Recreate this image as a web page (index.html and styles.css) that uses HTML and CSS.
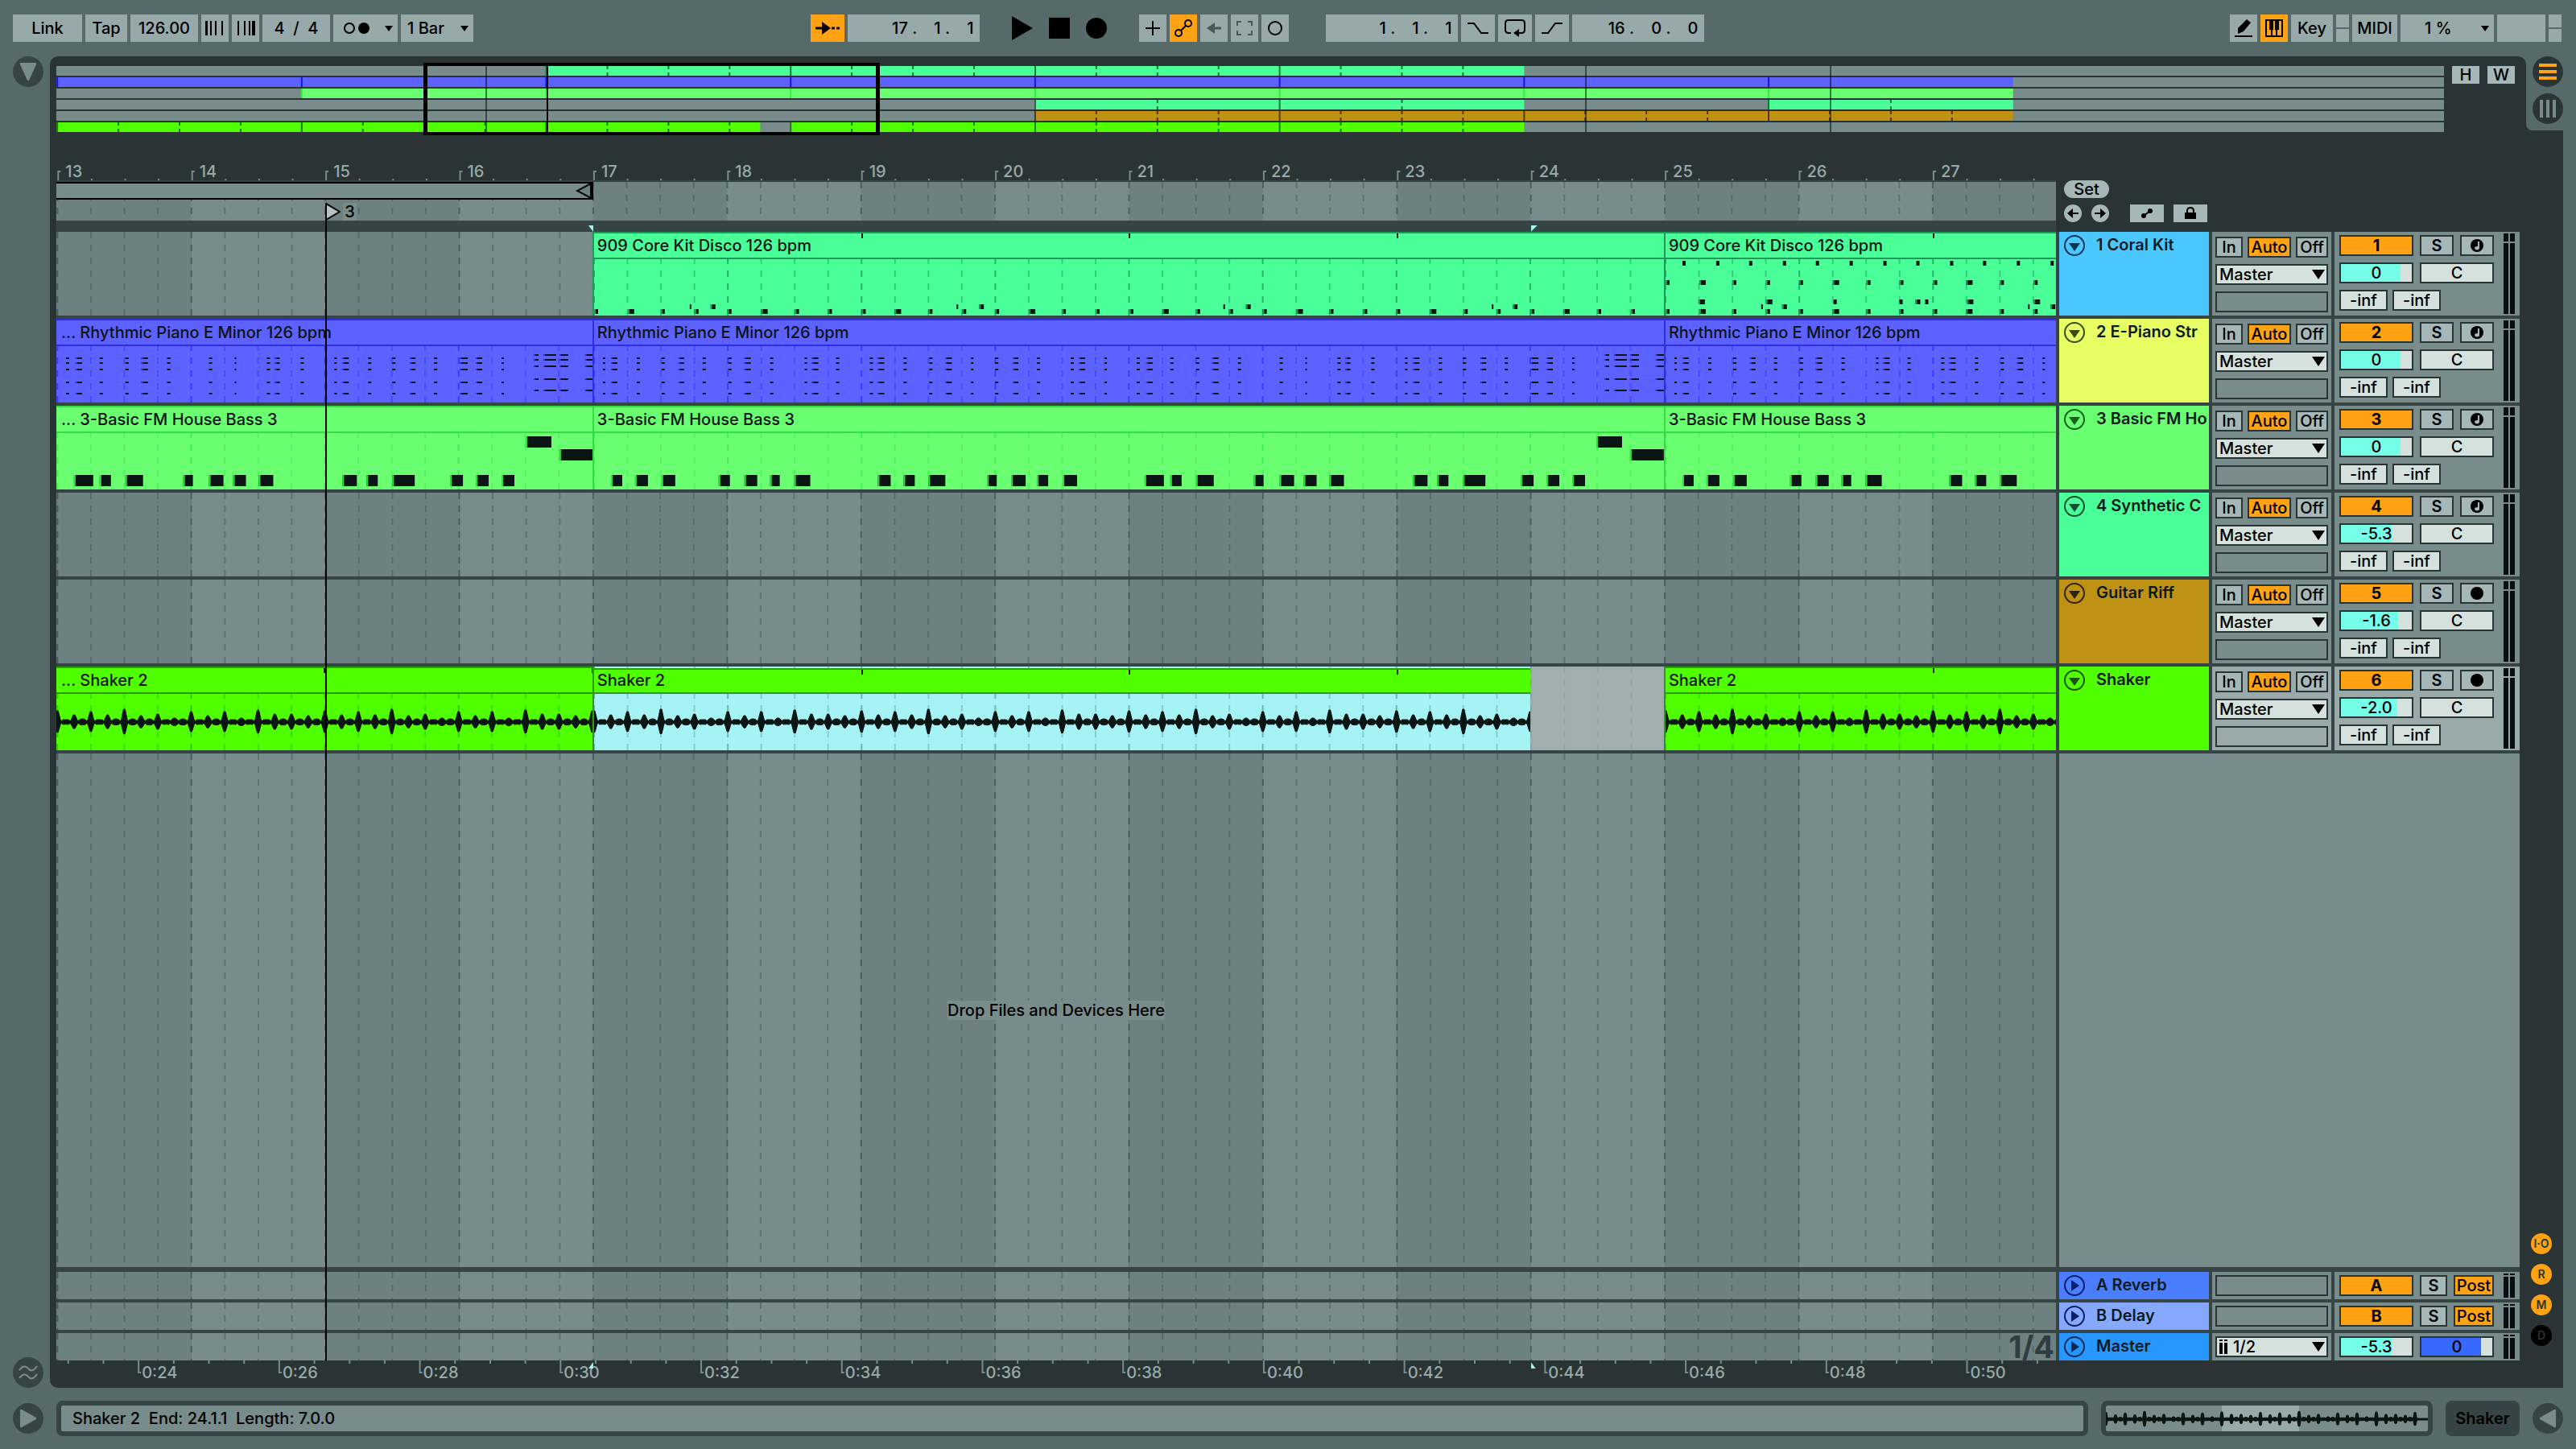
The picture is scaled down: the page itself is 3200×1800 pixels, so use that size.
FILE: index.html
```html
<!DOCTYPE html>
<html lang="en">
<head>
<meta charset="UTF-8">
<title>Arrangement</title>
<link rel="stylesheet" href="styles.css">
</head>
<body>

<header class="toolbar">
  <div class="group">
    <button class="btn w86">Link</button>
    <button class="btn w52">Tap</button>
    <input class="btn w84" value="126.00" aria-label="Tempo">
    <button class="btn w34" aria-label="Nudge down"><svg width="24" height="18"><path d="M2 0v18M7 0v18M13 0v18M21 0v18" stroke="#000" stroke-width="2"/><path d="M1 0v18" stroke="#000" stroke-width="3"/></svg></button>
    <button class="btn w34" aria-label="Nudge up"><svg width="24" height="18"><path d="M3 0v18M11 0v18M17 0v18" stroke="#000" stroke-width="2"/><path d="M22 0v18" stroke="#000" stroke-width="4"/></svg></button>
    <input class="btn w84 sig" value="4  /  4" aria-label="Time signature">
    <button class="btn w80 metro" aria-label="Metronome"><svg width="34" height="18"><circle cx="8" cy="9" r="6" fill="none" stroke="#000" stroke-width="2"/><circle cx="26" cy="9" r="7"/></svg><svg width="10" height="7"><path d="M0 0h10L5 7z"/></svg></button>
    <span class="pick w90"><select aria-label="Quantization"><option>1 Bar</option></select><svg width="10" height="7"><path d="M0 0h10L5 7z"/></svg></span>
  </div>
  <div class="space-left"></div>
  <div class="group">
    <button class="btn w42 on" aria-label="Follow"><svg width="30" height="18"><path d="M0 9h10M20 9h4M26 9h4" stroke="#000" stroke-width="3"/><path d="M8 1l11 8-11 8z"/></svg></button>
    <input class="btn position" value="17 .    1 .    1" aria-label="Arrangement position">
  </div>
  <div class="group transport">
    <button class="bare" aria-label="Play"><svg width="26" height="30"><path d="M0 0l26 15L0 30z"/></svg></button>
    <button class="bare" aria-label="Stop"><svg width="26" height="26"><path d="M0 0h26v26H0z"/></svg></button>
    <button class="bare" aria-label="Record"><svg width="26" height="26"><circle cx="13" cy="13" r="13"/></svg></button>
  </div>
  <div class="group">
    <button class="btn w34" aria-label="Overdub"><svg width="18" height="18"><path d="M9 0v18M0 9h18" stroke="#000" stroke-width="2"/></svg></button>
    <button class="btn w34 on" aria-label="Automation arm"><svg width="24" height="24" fill="none" stroke="#000" stroke-width="2"><circle cx="6" cy="18" r="4"/><circle cx="18" cy="6" r="4"/><path d="M9 15l6-6"/></svg></button>
    <button class="btn w34" aria-label="Re-enable automation"><svg width="18" height="16"><path d="M9 8h9" stroke="#44595a" stroke-width="3"/><path d="M0 8l10-7v14z" fill="#44595a"/></svg></button>
    <button class="btn w34" aria-label="Capture"><svg width="20" height="18" fill="none" stroke="#44595a" stroke-width="2"><path d="M1 6V1h5M14 1h5v5M19 12v5h-5M6 17H1v-5"/></svg></button>
    <button class="btn w34" aria-label="Session record"><svg width="20" height="20"><circle cx="10" cy="10" r="8" fill="none" stroke="#000" stroke-width="2"/></svg></button>
  </div>
  <div class="group loop-group">
    <input class="btn position" value="1 .    1 .    1" aria-label="Loop start">
    <button class="btn w42" aria-label="Punch in"><svg width="26" height="14"><path d="M0 1h8l9 12h9" fill="none" stroke="#000" stroke-width="2"/></svg></button>
    <button class="btn w42" aria-label="Loop"><svg width="26" height="24"><path d="M8 18H5q-4 0-4-4V6q0-4 4-4h16q4 0 4 4v8q0 4-4 4h-4" fill="none" stroke="#000" stroke-width="2"/><path d="M11 18l7-5v10z"/></svg></button>
    <button class="btn w42" aria-label="Punch out"><svg width="26" height="14"><path d="M0 13h8l9-12h9" fill="none" stroke="#000" stroke-width="2"/></svg></button>
    <input class="btn position" value="16 .    0 .    0" aria-label="Loop length">
  </div>
  <div class="space-right"></div>
  <div class="group">
    <button class="btn w34" aria-label="Draw mode"><svg width="22" height="24"><path d="M4 12L15 1l5 4-9 11-7 3z"/><path d="M0 22h22" stroke="#000" stroke-width="2"/></svg></button>
    <button class="btn w34 on" aria-label="Computer keyboard"><svg width="22" height="22"><path d="M1 1h20v20H1zM8 12v9M14 12v9" fill="none" stroke="#000" stroke-width="2"/><path d="M5 1h5v12H5zM12 1h5v12h-5z"/></svg></button>
    <button class="btn w52">Key</button>
    <span class="leds"><i></i><i></i></span>
    <button class="btn w56">MIDI</button>
    <span class="pick cpu"><select aria-label="CPU load"><option>1 %</option></select><svg width="10" height="7"><path d="M0 0h10L5 7z"/></svg></span>
    <span class="btn w60"></span>
    <span class="leds"><i></i><i></i></span>
  </div>
</header>

<main class="workspace">
  <aside class="gutter">
    <button class="round" aria-label="Show browser"><svg width="22" height="24"><path d="M2 1h18q2 0 1 2l-9 20h-2L1 3q-1-2 1-2z" fill="#788d8b"/></svg></button>
    <button class="round" aria-label="Groove pool"><svg width="24" height="20" fill="none" stroke="#788d8b" stroke-width="2"><path d="M1 7q6-8 11-2t11-3M1 17q6-8 11-2t11-3"/></svg></button>
  </aside>

  <section class="panel">
    <div class="overview-row">
      <div class="overview" id="overview"></div>
      <button class="small w34">H</button>
      <button class="small w34">W</button>
    </div>

    <div class="ruler-row">
      <div class="ruler">
        <div class="bars" id="bars"></div>
        <div class="scrub" id="scrub"></div>
        <div class="divider" id="divider"></div>
      </div>
      <div class="ruler-tools">
        <button class="set">Set</button>
        <div class="tool-line">
          <button class="dot" aria-label="Previous locator"><svg width="14" height="12"><path d="M5 6h9" stroke="#000" stroke-width="2"/><path d="M0 6l7-6v12z"/></svg></button>
          <button class="dot" aria-label="Next locator"><svg width="14" height="12"><path d="M0 6h9" stroke="#000" stroke-width="2"/><path d="M14 6L7 0v12z"/></svg></button>
          <button class="small w42 first" aria-label="Automation mode"><svg width="16" height="14"><path d="M4 10l8-6" stroke="#000" stroke-width="2"/><circle cx="4" cy="10" r="3"/><circle cx="12" cy="4" r="3"/></svg></button>
          <button class="small w42" aria-label="Lock envelopes"><svg width="16" height="16"><path d="M1 7h14v8H1z"/><path d="M4 8V5q0-4 4-4t4 4v3" fill="none" stroke="#000" stroke-width="2"/></svg></button>
        </div>
      </div>
    </div>

    <div class="arranger">
      <div id="tracks"></div>
      <div class="row drop-row">
        <div class="lane" id="dropLane"><span class="drop-text">Drop Files and Devices Here</span></div>
        <div class="drop-side"></div>
      </div>
      <div class="returns" id="returns"></div>
      <div class="playhead-area"><div class="playhead" id="playhead"></div></div>
    </div>
    <div class="time-ruler" id="timeRuler"></div>
  </section>

  <aside class="gutter right">
    <div class="views">
      <button class="round dark" aria-label="Arrangement view"><svg width="22" height="20"><path d="M0 2h22M0 10h22M0 18h22" stroke="#ffa315" stroke-width="4"/></svg></button>
      <button class="round dark" aria-label="Session view"><svg width="20" height="22"><path d="M2 0v22M10 0v22M18 0v22" stroke="#788d8b" stroke-width="4"/></svg></button>
    </div>
    <div class="sections">
      <button class="chip">I·O</button>
      <button class="chip">R</button>
      <button class="chip">M</button>
      <button class="chip off">D</button>
    </div>
  </aside>
</main>

<footer class="status">
  <button class="round" aria-label="Show info"><svg width="22" height="24"><path d="M1 2v20q0 2 2 1l18-10v-2L3 1Q1 0 1 2z" fill="#788d8b"/></svg></button>
  <div class="info">Shaker 2&nbsp; End: 24.1.1&nbsp; Length: 7.0.0</div>
  <div class="mini" id="mini"></div>
  <button class="device">Shaker</button>
  <button class="round" aria-label="Show detail"><svg width="22" height="24"><path d="M21 2v20q0 2-2 1L1 13v-2L19 1q2-1 2 1z" fill="#788d8b"/></svg></button>
</footer>

<script src="script.js"></script>
</body>
</html>
```
FILE: styles.css
```css
* {
  box-sizing: border-box;
}
body {
  margin: 0;
  height: 100vh;
  display: flex;
  flex-direction: column;
  background: #566a6a;
  color: #000;
  font-family: Inter, "Liberation Sans", sans-serif;
  font-size: 20px;
  font-weight: 500;
  line-height: 24px;
  overflow: hidden;
}
button, input, select {
  font: inherit;
  color: inherit;
  border: 0;
  border-radius: 0;
  padding: 0;
  margin: 0;
  appearance: none;
  background: none;
}
svg {
  display: block;
}

/* toolbar */
.toolbar {
  display: flex;
  align-items: center;
  padding: 18px 18px 18px 16px;
}
.group {
  display: flex;
  gap: 4px;
}
.space-left {
  flex: 9;
}
.space-right {
  flex: 14;
}
.btn, .pick {
  height: 34px;
  background: #97aaa9;
  display: flex;
  align-items: center;
  justify-content: center;
  text-align: center;
}
.w34 { width: 34px; }
.w42 { width: 42px; }
.w52 { width: 52px; }
.w56 { width: 56px; }
.w60 { width: 60px; }
.w80 { width: 80px; }
.w84 { width: 84px; }
.w86 { width: 86px; }
.w90 { width: 90px; }
.on {
  background: #ffa315;
}
.sig, .position {
  white-space: pre;
}
.position {
  width: 164px;
  text-align: right;
  padding-right: 8px;
}
.metro {
  justify-content: space-between;
  padding: 0 6px 0 12px;
}
.transport {
  margin: 0 40px;
  gap: 20px;
  align-items: center;
}
.loop-group {
  margin-left: 46px;
}
.pick {
  position: relative;
}
.pick select {
  width: 100%;
  height: 100%;
  padding-left: 8px;
}
.pick svg {
  position: absolute;
  right: 6px;
  pointer-events: none;
}
.cpu {
  width: 116px;
}
.cpu select {
  padding-left: 30px;
}
.leds {
  width: 16px;
  display: flex;
  flex-direction: column;
  gap: 2px;
}
.leds i {
  flex: 1;
  background: #97aaa9;
}

/* workspace */
.workspace {
  flex: 1;
  min-height: 0;
  display: flex;
}
.gutter {
  width: 62px;
  padding-left: 16px;
  display: flex;
  flex-direction: column;
  justify-content: space-between;
}
.round {
  width: 38px;
  height: 38px;
  flex: none;
  border-radius: 50%;
  background: #364445;
  display: flex;
  align-items: center;
  justify-content: center;
}
.round.dark {
  background: #2a3435;
}
.gutter.right {
  width: 62px;
  padding: 0 16px 0 0;
  background: linear-gradient(#2a3435, #2a3435) left / 46px 100% no-repeat;
}
.views {
  width: 62px;
  height: 92px;
  padding-left: 8px;
  background: #566a6a;
  border-bottom-left-radius: 8px;
  display: flex;
  flex-direction: column;
  gap: 8px;
}
.sections {
  display: flex;
  flex-direction: column;
  gap: 12px;
  padding: 0 0 52px 6px;
}
.chip {
  width: 26px;
  height: 26px;
  border-radius: 50%;
  background: #ffa315;
  color: #2a3435;
  font-size: 14px;
  font-weight: 600;
  line-height: 26px;
}
.chip.off {
  background: #000;
}
.panel {
  flex: 1;
  min-width: 0;
  display: flex;
  flex-direction: column;
  background: #2a3435;
  border-radius: 10px 10px 0 10px;
  padding: 12px 8px 0 8px;
}
.small {
  height: 22px;
  background: #a5b7b6;
  display: flex;
  align-items: center;
  justify-content: center;
}
.overview-row {
  display: flex;
  gap: 10px;
  height: 142px;
  padding-right: 6px;
}
.overview {
  position: relative;
  flex: 1;
  height: 82px;
  display: flex;
  flex-direction: column;
  gap: 2px;
}
.overview .strip {
  height: 12px;
  background: #788d8b;
}
.strip svg, .lane > svg, .clip > svg, .scrub > svg, .mini svg {
  width: 100%;
  height: 100%;
}
.overview .cursor {
  position: absolute;
  top: 0;
  bottom: 0;
  width: 2px;
  background: rgba(0, 0, 0, 0.5);
}
.overview .cursor.insert {
  background: #000;
}
.overview .viewport {
  position: absolute;
  top: -4px;
  bottom: -4px;
  border: 4px solid #000;
  border-width: 4px 5px;
}

/* ruler */
.ruler-row {
  display: flex;
  height: 64px;
}
.ruler {
  flex: 1;
  position: relative;
  margin-top: -18px;
  display: flex;
  flex-direction: column;
}
.bars {
  height: 20px;
  border-bottom: 2px solid #364445;
  position: relative;
  color: #97aaa9;
}
.bars .num, .time-ruler .num {
  position: absolute;
  white-space: nowrap;
}
.bars .num {
  bottom: -1px;
  padding-left: 10px;
}
.bars svg, .time-ruler svg {
  position: absolute;
  inset: 0;
  width: 100%;
  height: 100%;
}
.scrub {
  position: relative;
  height: 48px;
  background: #788d8b;
}
.brace {
  position: absolute;
  top: 0;
  left: 0;
  height: 22px;
  border: 2px solid #000;
  border-left: 0;
  background: #788d8b;
  display: flex;
  justify-content: flex-end;
}
.locator {
  position: absolute;
  top: 26px;
  display: flex;
  line-height: 22px;
}
.locator span {
  margin-left: 3px;
  padding: 0 2px;
  background: #788d8b;
}
.divider {
  position: relative;
  height: 14px;
  background: #364445;
}
.divider .mark {
  position: absolute;
  bottom: 0;
  width: 8px;
  height: 8px;
  background: #a5f3f5;
  clip-path: polygon(0 0, 100% 0, 0 100%);
}
.divider .mark.end {
  width: 6px;
  clip-path: polygon(0 0, 100% 0, 100% 100%);
  transform: translateX(-6px);
}
.ruler-tools {
  width: 576px;
  padding: 0 0 0 10px;
}
.set {
  display: block;
  width: 56px;
  height: 22px;
  border-radius: 11px;
  background: #a5b7b6;
  line-height: 22px;
}
.tool-line {
  display: flex;
  gap: 12px;
  margin-top: 8px;
}
.tool-line .first {
  margin-left: 14px;
}
.dot {
  width: 22px;
  height: 22px;
  border-radius: 50%;
  background: #a5b7b6;
  display: flex;
  align-items: center;
  justify-content: center;
}

/* tracks */
.arranger {
  position: relative;
  flex: 1;
  min-height: 0;
  display: flex;
  flex-direction: column;
  background: #364445;
}
.row {
  display: flex;
  gap: 4px;
  height: 104px;
  margin-bottom: 4px;
}
.lane {
  position: relative;
  flex: 1;
  min-width: 0;
  display: flex;
}
.lane > svg {
  position: absolute;
  inset: 0;
}
.segment, .clip {
  position: relative;
  min-width: 0;
}
.segment.selected {
  background: rgba(185, 198, 197, 0.6);
}
.clip {
  background: var(--color);
  border-left: 2px solid var(--edge);
  overflow: hidden;
}
.clip.cut {
  border-left: 0;
}
.clip > svg {
  position: absolute;
  inset: 0;
}
.clip.selected {
  background: #a5f3f5;
  box-shadow: inset 0 2px #a5f3f5;
  padding-top: 2px;
}
.clip-name {
  position: relative;
  height: 34px;
  border: solid var(--edge);
  border-width: 2px 0;
  background: var(--color);
  padding: 3px 4px;
  white-space: nowrap;
  color: #0b1513;
}
.clip.cut .clip-name {
  padding-left: 6px;
}
.clip-name .tick {
  position: absolute;
  top: 0;
  width: 2px;
  height: 6px;
  background: #0b1513;
}
.clip.selected .clip-name {
  height: 32px;
  padding-top: 1px;
}
.head {
  width: 186px;
  background: var(--color);
  padding: 4px 0 4px 6px;
  display: flex;
  gap: 14px;
  overflow: hidden;
  white-space: nowrap;
  font-weight: 600;
  color: #0b1b1d;
}
.head svg {
  flex: none;
}
.io {
  width: 148px;
  padding: 6px 4px;
  background: #788d8b;
}
.io-line {
  display: flex;
  justify-content: space-between;
  margin-bottom: 8px;
}
.box {
  height: 26px;
  border: 2px solid #2a3435;
  background: #a5b7b6;
  line-height: 22px;
  text-align: center;
  display: flex;
  align-items: center;
  justify-content: center;
}
.box.on {
  background: #ffa315;
}
.box.empty {
  background: none;
}
.box.field {
  background: #d4e1dd;
}
.io .in { width: 34px; }
.io .auto { width: 54px; }
.io .out { width: 40px; }
.route {
  position: relative;
  width: 140px;
  margin-bottom: 8px;
}
.route select {
  width: 100%;
  padding-left: 3px;
}
.route svg {
  position: absolute;
  right: 2px;
  pointer-events: none;
}
.mixer {
  width: 230px;
  padding: 4px 6px;
  background: #788d8b;
  display: flex;
  justify-content: space-between;
}
.row.active .io, .row.active .mixer {
  background: #98aaa9;
}
.controls {
  display: grid;
  grid-template-columns: 92px 92px;
  gap: 8px;
  align-content: start;
}
.pair {
  display: flex;
  justify-content: space-between;
}
.number {
  width: 92px;
  font-weight: 700;
}
.solo {
  width: 42px;
  font-weight: 600;
}
.arm {
  width: 42px;
}
.value {
  width: 92px;
  background: linear-gradient(to right, var(--fill) var(--level), #d4e1dd var(--level));
}
.sends {
  grid-column: 1 / 3;
  display: flex;
  gap: 6px;
}
.sends .box {
  width: 60px;
}
.meter {
  display: grid;
  grid-template-columns: 6px 6px;
  grid-template-rows: 10px 1fr;
  gap: 2px;
  margin: -2px 0;
}
.meter i {
  background: #0a0e10;
}
.drop-row {
  flex: 1;
  min-height: 0;
  height: auto;
  margin-bottom: 6px;
}
.drop-row .lane {
  align-items: center;
  justify-content: center;
}
.drop-text {
  position: relative;
  background: #788d8b;
}
.drop-side {
  width: 572px;
  background: #788d8b;
}
.returns .row {
  height: 34px;
}
.returns .row:last-child {
  margin-bottom: 0;
}
.returns .io {
  padding: 4px;
}
.returns .solo {
  width: 34px;
}
.returns .post {
  width: 50px;
}
.returns .meter {
  grid-template-rows: 2px 1fr;
}
.route .bars-icon {
  left: 2px;
  right: auto;
}
.route .indent {
  padding-left: 20px;
}
.fraction {
  position: absolute;
  right: 2px;
  bottom: 0;
  font-size: 38px;
  font-weight: 700;
  line-height: 34px;
  color: #2f3d3e;
}
.playhead-area {
  position: absolute;
  inset: -36px 576px 0 0;
  pointer-events: none;
}
.playhead {
  position: absolute;
  top: 0;
  bottom: 0;
  width: 2px;
  background: #000;
}
.time-ruler {
  position: relative;
  height: 34px;
  margin-right: 576px;
  color: #97aaa9;
}
.time-ruler .num {
  top: 3px;
  padding-left: 5px;
}
.time-ruler .mark {
  position: absolute;
  top: 2px;
  width: 6px;
  height: 8px;
  background: #a5f3f5;
  clip-path: polygon(100% 0, 100% 100%, 0 100%);
  transform: translateX(-6px);
}
.time-ruler .mark.end {
  clip-path: polygon(0 0, 100% 100%, 0 100%);
  transform: none;
}

/* status bar */
.status {
  display: flex;
  align-items: center;
  gap: 16px;
  padding: 16px;
}
.info, .mini {
  height: 44px;
  border: 6px solid #364445;
  border-radius: 8px;
  background: #788d8b;
}
.info {
  flex: 1;
  padding: 4px 14px;
}
.mini {
  width: 412px;
}
.device {
  width: 92px;
  height: 44px;
  border-radius: 8px;
  background: #364445;
  font-weight: 600;
}
```
FILE: script.js
```js
// visible part of the arrangement, in bars
const START = 12.992;
const END = 27.92;
const BAR = 166.4; // note positions below are written at this zoom

const pct = bar => ((bar - START) / (END - START) * 100) + "%";
const arrow = '<svg width="16" height="14"><path d="M0 1h16L8 13z"/></svg>';

function grid(from, to, color) {
  const x = bar => ((bar - from) / (to - from) * 100) + "%";
  let out = "";
  for (let b = Math.ceil(from * 4); b < to * 4; b++) {
    const strong = b % 4 === 0;
    out += `<line x1="${x(b / 4)}" x2="${x(b / 4)}" y1="0" y2="100%" stroke="${color}" stroke-opacity="${strong ? 0.65 : 0.4}" stroke-width="2" stroke-dasharray="8 8"/>`;
  }
  return out;
}

function laneSvg() {
  let out = "";
  for (let b = 12; b < END; b++) {
    const w = 1 / (END - START) * 100;
    out += `<rect x="${pct(b)}" y="0" width="${w}%" height="100%" fill="${b % 2 ? "#6d8280" : "#788d8b"}"/>`;
  }
  return `<svg>${out}${grid(START, END, "#364b4b")}</svg>`;
}

// [x, width] pairs from the start of the 8 bar clip
const pianoNotes = [[11,3],[21,8],[53,4],[84,4],[105,7],[135,4],[167,4],[187,8],[219,4],[262,3],[271,8],[301,4],
  [343,4],[353,8],[385,4],[417,4],[437,8],[469,3],[499,4],[521,7],[551,4],[593,4],[603,8],[635,3],[675,4],[687,8],
  [717,4],[749,4],[769,8],[801,4],[853,4],[885,2],[925,4],[935,6],[967,4],[1009,3],[1019,8],[1051,4],[1081,4],
  [1103,7],[1133,4],[1165,10],[1185,8],[1217,3]];
const pianoFill = [[1257,6],[1269,16],[1289,11],[1321,10]];
const bassNotes = [[21,14],[51,16],[84,17],[155,14],[187,16],[219,12],[249,20],[353,16],[385,14],[416,21],[489,12],
  [519,18],[551,14],[583,18],[685,24],[717,14],[749,22],[821,12],[853,18],[883,16],[915,18],[1019,18],[1049,14],
  [1081,28],[1153,16],[1185,16],[1217,16]];

const rows = (list, ys, h) => list.flatMap(([x, w]) => ys.map(y => [x, y, w, h]));

const piano = [...rows(pianoNotes, [48, 54, 62, 78, 92], 2), ...rows(pianoFill, [44, 50, 58, 74, 88], 2)];
const bass = [...rows(bassNotes, [86], 14), [1247, 38, 32, 14], [1289, 54, 42, 14]];

const beats = n => Array.from({ length: n }, (_, i) => [Math.round(i * BAR / 4), i % 4 === 1 ? 8 : 5]);
const kicks = rows(beats(32), [96], 6);
const claps = rows([[119,2],[145,6],[451,2],[479,6],[783,2],[811,6],[1117,2],[1143,6]], [90], 6);
const drumsA = [...kicks, ...claps];
const drumsB = [...kicks, ...claps.slice(0, 4), ...rows(beats(12), [60], 6),
  ...rows(beats(12).map(([x]) => [x + 21, 4]), [36], 6),
  ...rows([[41,8],[125,8],[209,4],[291,4],[311,6],[323,4],[375,8],[458,8]], [84], 6)];

function notesSvg(notes, from, to, offset, edge) {
  const total = (to - from) * BAR;
  const skip = offset * BAR;
  return notes.filter(n => n[0] >= skip - 1 && n[0] < skip + total).map(([x, y, w, h]) => {
    const left = (x - skip) / total * 100;
    return `<rect x="${left}%" y="${y}" width="${w / total * 100}%" height="${h}" fill="#0b1513"/>` +
      (w > 4 ? `<rect x="${left}%" y="${y}" width="2" height="${h}" fill="${edge}"/>` : "");
  }).join("");
}

// shaker hits, one per sixteenth over two bars
const hits = [14,3,9,4,13,3,9,4,16,4,8,4,10,3,5,4,13,3,8,4,13,3,5,3,15,3,10,4,10,4,8,4];

function wavePath(count, step, mid, scale) {
  const top = [];
  const bottom = [];
  for (let i = 0; i <= count; i++) {
    const a = hits[i % hits.length] * scale;
    const x = i * step;
    const w = step * 0.36;
    top.push([x - w, mid - 3 * scale], [x - 1, mid - a], [x + 1, mid - a], [x + w, mid - 3 * scale], [x + step / 2, mid - 1]);
    bottom.push([x - w, mid + 3 * scale], [x - 1, mid + a * 0.9], [x + 1, mid + a * 0.9], [x + w, mid + 3 * scale], [x + step / 2, mid + 1]);
  }
  return "M" + top.concat(bottom.reverse()).map(p => p.map(n => n.toFixed(1)).join(" ")).join("L") + "z";
}

function shakerSvg(from, to) {
  const w = (to - from) * BAR;
  return `<svg width="100%" height="104" viewBox="${(from - Math.round(from)) * BAR} 0 ${w} 104" preserveAspectRatio="none"><path d="${wavePath(Math.ceil((to - from) * 16), BAR / 16, 69, 1)}" fill="#0b1513" stroke="#0b1513"/></svg>`;
}

const tracks = [
  { name: "1 Coral Kit", color: "#4ac7ff", ink: "#0b3355", clipColor: "#4aff98", edge: "#23985a", line: "#0e8a52", vol: "0", level: 84, midi: true, loops: 2,
    clips: [{ from: 17, to: 25, name: "909 Core Kit Disco 126 bpm", notes: drumsA }, { from: 25, to: END, name: "909 Core Kit Disco 126 bpm", notes: drumsB }] },
  { name: "2 E-Piano Str", color: "#e8ff63", ink: "#3d4a12", clipColor: "#5d61ff", edge: "#2f2fe0", line: "#2a22ff", vol: "0", level: 84, midi: true,
    clips: [{ from: START, to: 17, name: "... Rhythmic Piano E Minor 126 bpm", notes: piano, offset: 3.985, cut: true },
      { from: 17, to: 25, name: "Rhythmic Piano E Minor 126 bpm", notes: piano }, { from: 25, to: END, name: "Rhythmic Piano E Minor 126 bpm", notes: piano }] },
  { name: "3 Basic FM Ho", color: "#69ff70", ink: "#14601c", clipColor: "#69ff70", edge: "#35dd40", line: "#2be845", vol: "0", level: 84, midi: true,
    clips: [{ from: START, to: 17, name: "... 3-Basic FM House Bass 3", notes: bass, offset: 3.985, cut: true },
      { from: 17, to: 25, name: "3-Basic FM House Bass 3", notes: bass }, { from: 25, to: END, name: "3-Basic FM House Bass 3", notes: bass }] },
  { name: "4 Synthetic C", color: "#4aff98", ink: "#0e5034", vol: "-5.3", level: 72, midi: true, clips: [] },
  { name: "Guitar Riff", color: "#bf9213", ink: "#2e2306", vol: "-1.6", level: 81, clips: [] },
  { name: "Shaker", color: "#50ff00", ink: "#1c5206", clipColor: "#50ff00", edge: "#2c9c0c", line: "#1fae10", vol: "-2.0", level: 79, active: true, loops: 2,
    clips: [{ from: START, to: 17, name: "... Shaker 2", wave: true, cut: true }, { from: 17, to: 24, name: "Shaker 2", wave: true, selected: true },
      { from: 25, to: END, name: "Shaker 2", wave: true }] }
];

function clipHtml(track, clip) {
  const len = clip.to - clip.from;
  const body = clip.wave ? shakerSvg(clip.from, clip.to) : notesSvg(clip.notes, clip.from, clip.to, clip.offset || 0, track.edge);
  let ticks = "";
  for (let b = 2; track.loops && b < len; b += track.loops) {
    ticks += `<i class="tick" style="left:${b / len * 100}%"></i>`;
  }
  return `<div class="clip${clip.cut ? " cut" : ""}${clip.selected ? " selected" : ""}" style="flex:${len} 1 0">
    <svg>${grid(clip.from, clip.to, clip.selected ? "#5a8f94" : track.line)}${body}</svg>
    <div class="clip-name">${ticks}${clip.name}</div></div>`;
}

function laneHtml(track) {
  let at = START;
  let out = "";
  track.clips.forEach(clip => {
    if (clip.from > at) {
      out += `<div class="segment${track.active ? " selected" : ""}" style="flex:${clip.from - at} 1 0"></div>`;
    }
    out += clipHtml(track, clip);
    at = clip.to;
  });
  return `<div class="lane">${laneSvg()}${out}</div>`;
}

const fold = (ink, open) => `<svg width="26" height="26"><circle cx="13" cy="13" r="12" fill="none" stroke="${ink}" stroke-width="2"/><path d="${open ? "M6 10h14l-7 10z" : "M9 6v14l10-7z"}" fill="${ink}"/></svg>`;
const armMidi = '<svg width="16" height="16"><circle cx="8" cy="8" r="8"/><path d="M9 3h2v7a3 3 0 0 1-6 1q0-2 4-2z" fill="#a5b7b6"/></svg>';
const armAudio = '<svg width="16" height="16"><circle cx="8" cy="8" r="8"/></svg>';
const meter = '<div class="meter"><i></i><i></i><i></i><i></i></div>';

document.getElementById("tracks").innerHTML = tracks.map((t, i) => `
  <div class="row${t.active ? " active" : ""}" style="--color:${t.clipColor || t.color};--edge:${t.edge || "#000"}">
    ${laneHtml(t)}
    <div class="head" style="--color:${t.color}">${fold(t.ink, true)}<span>${t.name}</span></div>
    <div class="io">
      <div class="io-line"><button class="box in">In</button><button class="box on auto">Auto</button><button class="box out">Off</button></div>
      <div class="route box field"><select aria-label="Output of ${t.name}"><option>Master</option></select>${arrow}</div>
      <div class="box empty"></div>
    </div>
    <div class="mixer">
      <div class="controls">
        <button class="box on number">${i + 1}</button>
        <div class="pair"><button class="box solo">S</button><button class="box arm" aria-label="Arm">${t.midi ? armMidi : armAudio}</button></div>
        <input class="box value" value="${t.vol}" aria-label="Volume" style="--fill:#75ffe8;--level:${t.level}%">
        <input class="box field value" value="C" aria-label="Pan" style="--level:0%">
        <div class="sends"><input class="box field" value="-inf" aria-label="Send A"><input class="box field" value="-inf" aria-label="Send B"></div>
      </div>
      ${meter}
    </div>
  </div>`).join("");

document.getElementById("dropLane").insertAdjacentHTML("afterbegin", laneSvg());

const returns = [
  { name: "A Reverb", color: "#4a7dff", key: "A" },
  { name: "B Delay", color: "#87a8ff", key: "B" }
];
document.getElementById("returns").innerHTML = returns.map(r => `
  <div class="row">
    <div class="lane">${laneSvg()}</div>
    <div class="head" style="--color:${r.color}">${fold("#0b1f66", false)}<span>${r.name}</span></div>
    <div class="io"><div class="box empty"></div></div>
    <div class="mixer"><div class="controls"><button class="box on number">${r.key}</button>
      <div class="pair"><button class="box solo">S</button><button class="box on post">Post</button></div></div>${meter}</div>
  </div>`).join("") + `
  <div class="row">
    <div class="lane">${laneSvg()}<span class="fraction">1/4</span></div>
    <div class="head" style="--color:#2896ff">${fold("#0b2a55", false)}<span>Master</span></div>
    <div class="io"><div class="route box field"><svg class="bars-icon" width="12" height="18"><path d="M3 4v14M9 4v14M3 0v2M9 0v2" stroke="#000" stroke-width="4"/></svg><select class="indent" aria-label="Master output"><option>1/2</option></select>${arrow}</div></div>
    <div class="mixer"><div class="controls"><input class="box value" value="-5.3" aria-label="Master volume" style="--fill:#75ffe8;--level:72%">
      <input class="box value" value="0" aria-label="Cue volume" style="--fill:#3569ff;--level:84%"></div>${meter}</div>
  </div>`;

document.getElementById("playhead").style.left = pct(15);

// bar ruler
let marks = "";
let nums = "";
for (let b = 52; b < END * 4; b++) {
  const x = pct(b / 4);
  if (b % 4 === 0) {
    marks += `<svg x="${x}" overflow="visible"><path d="M1 18V7h3" fill="none" stroke="#788d8b" stroke-width="2"/></svg>`;
    nums += `<span class="num" style="left:${x}">${b / 4}</span>`;
  } else {
    marks += `<svg x="${x}" overflow="visible"><path d="M1 16v2" stroke="#788d8b" stroke-width="2"/></svg>`;
  }
}
document.getElementById("bars").innerHTML = `<svg>${marks}</svg>${nums}`;
document.getElementById("scrub").innerHTML = laneSvg() +
  `<div class="brace" style="width:${pct(17)}"><svg width="20" height="18"><path d="M19 0L2 9l17 9z" fill="#6d8280" stroke="#000" stroke-width="2"/></svg></div>
   <div class="locator" style="left:${pct(15)}"><svg width="19" height="22"><path d="M1 1v20L18 11z" fill="#b4c5c3" stroke="#000" stroke-width="2"/></svg><span>3</span></div>`;
document.getElementById("divider").innerHTML = `<i class="mark end" style="left:${pct(17)}"></i><i class="mark" style="left:${pct(24)}"></i>`;

// time ruler, 126 bpm
marks = "";
nums = "";
for (let t = 23; ; t += 0.5) {
  const bar = 1 + t * 126 / 240;
  if (bar > END) break;
  const x = pct(bar);
  const major = t % 2 === 0;
  marks += `<svg x="${x}" overflow="visible"><path d="${major ? "M1 0v15h3" : "M1 0v4"}" fill="none" stroke="#788d8b" stroke-width="2"/></svg>`;
  if (major) nums += `<span class="num" style="left:${x}">0:${t}</span>`;
}
document.getElementById("timeRuler").innerHTML = `<svg>${marks}</svg>${nums}<i class="mark" style="left:${pct(17)}"></i><i class="mark end" style="left:${pct(24)}"></i>`;

// overview: [from, to, colour, tick spacing]
const songStart = 0.97;
const songEnd = 79.1;
const songX = bar => ((bar - songStart) / (songEnd - songStart) * 100) + "%";
const strips = [
  { edge: "#17753f", parts: [[17, 49, "#4aff98", 2]] },
  { edge: "#1a12e8", parts: [[1, 65, "#5d61ff", 8]] },
  { edge: "#34f03c", parts: [[9, 65, "#69ff70", 8]] },
  { edge: "#17753f", parts: [[33, 49, "#4aff98", 4], [57, 65, "#4aff98", 4]] },
  { edge: "#5a3506", parts: [[33, 65, "#bf9213", 2]] },
  { edge: "#1f7a08", parts: [[1, 24, "#50ff00", 2], [25, 49, "#50ff00", 2]] }
];
document.getElementById("overview").innerHTML = strips.map(s => {
  let out = "";
  s.parts.forEach(([from, to, color, step]) => {
    out += `<rect x="${songX(from)}" width="${(to - from) / (songEnd - songStart) * 100}%" height="12" fill="${color}"/>`;
    for (let b = from; b < to; b += step) {
      const dash = (b - 1) % 8 ? 'stroke-dasharray="4 4"' : "";
      out += `<line x1="${songX(b)}" x2="${songX(b)}" y1="0" y2="12" stroke="${s.edge}" stroke-width="2" ${dash}/>`;
    }
  });
  return `<div class="strip"><svg>${out}</svg></div>`;
}).join("") + [15, 51, 59].map(b => `<i class="cursor" style="left:${songX(b)}"></i>`).join("") +
  `<i class="cursor insert" style="left:${songX(17)}"></i>
   <div class="viewport" style="left:${songX(START)};width:${(END - START) / (songEnd - songStart) * 100}%"></div>`;

// clip overview in the status bar
document.getElementById("mini").innerHTML = `<svg viewBox="0 0 400 32" preserveAspectRatio="none"><rect x="144" width="96" height="32" fill="#97aaa9"/><path d="${wavePath(64, 6, 17, 0.6)}M0 16h400v2H0z" fill="#0b1513" stroke="#0b1513"/></svg>`;
```
